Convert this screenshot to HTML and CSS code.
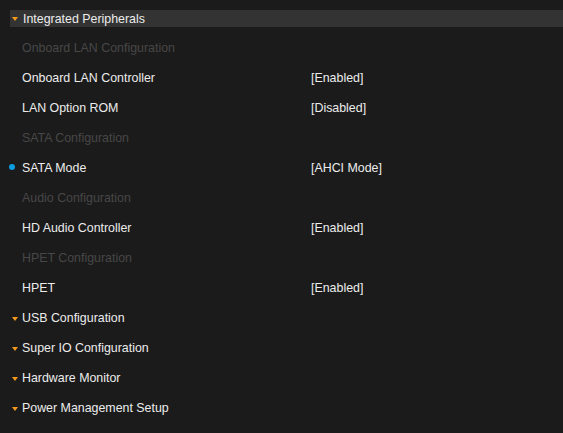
FILE: index.html
```html
<!DOCTYPE html>
<html lang="en">
<head>
    <meta charset="UTF-8">
    <title>Integrated Peripherals</title>
    <link rel="stylesheet" href="styles.css">
</head>
<body>
    <div class="menu">
        <div class="section-head">
            <span class="arrow"></span>
            <span>Integrated Peripherals</span>
        </div>

        <div class="item group">Onboard LAN Configuration</div>
        <div class="item"><span class="label">Onboard LAN Controller</span><span class="value">[Enabled]</span></div>
        <div class="item"><span class="label">LAN Option ROM</span><span class="value">[Disabled]</span></div>
        <div class="item group">SATA Configuration</div>
        <div class="item selected"><span class="dot"></span><span class="label">SATA Mode</span><span class="value">[AHCI Mode]</span></div>
        <div class="item group">Audio Configuration</div>
        <div class="item"><span class="label">HD Audio Controller</span><span class="value">[Enabled]</span></div>
        <div class="item group">HPET Configuration</div>
        <div class="item"><span class="label">HPET</span><span class="value">[Enabled]</span></div>

        <div class="item folder"><span class="arrow"></span>USB Configuration</div>
        <div class="item folder"><span class="arrow"></span>Super IO Configuration</div>
        <div class="item folder"><span class="arrow"></span>Hardware Monitor</div>
        <div class="item folder"><span class="arrow"></span>Power Management Setup</div>
    </div>
</body>
</html>
```

FILE: styles.css
```css
body {
    margin: 0;
    background-color: #1b1b1b;
    font-family: 'Liberation Sans', Arial, sans-serif;
    font-size: 12.4px;
    color: #ececec;
}

.menu {
    padding-top: 10px;
    padding-left: 10px;
    height: 423px;
}

.section-head {
    position: relative;
    height: 17px;
    background-color: #333333;
    display: flex;
    align-items: center;
    padding-left: 13px;
    margin-bottom: 5px;
}

.section-head .arrow {
    position: absolute;
    left: 2px;
    top: 7px;
}

.arrow {
    width: 0;
    height: 0;
    border-left: 3px solid transparent;
    border-right: 3px solid transparent;
    border-top: 4px solid #f39a1e;
}

.item {
    position: relative;
    height: 30px;
    box-sizing: border-box;
    padding-top: 1px;
    display: flex;
    align-items: center;
    padding-left: 12px;
}

.item .label {
    width: 289px;
}

.group {
    color: #474747;
}

.folder .arrow {
    position: absolute;
    left: 2px;
    top: 15px;
}

.dot {
    position: absolute;
    left: -1px;
    top: 12px;
    width: 6px;
    height: 6px;
    border-radius: 50%;
    background-color: #0c9ce2;
}
```
